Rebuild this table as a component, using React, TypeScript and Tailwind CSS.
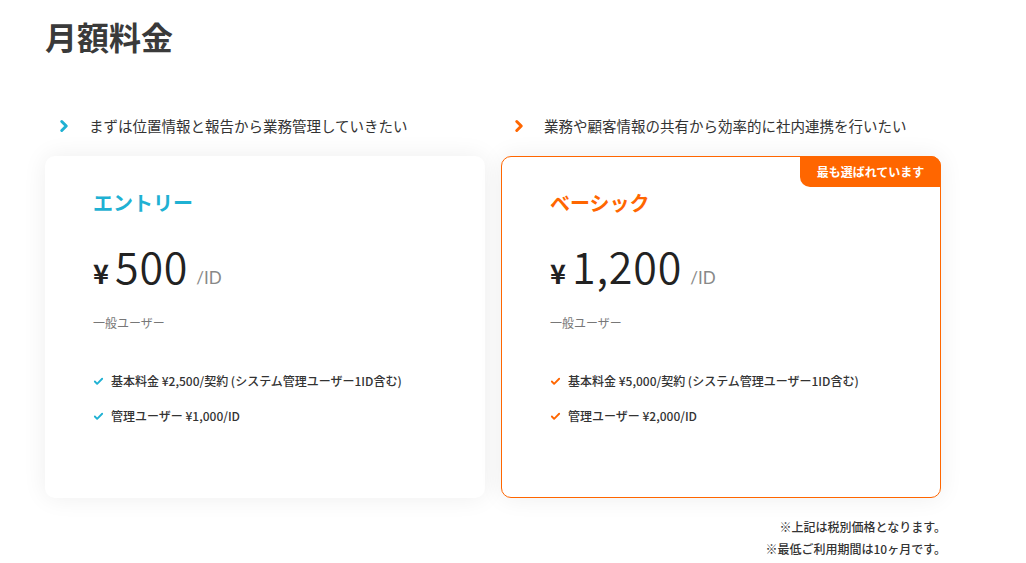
import { Check, ChevronRight } from "lucide-react";

const jp = "font-['Noto_Sans_CJK_JP','Noto_Sans',sans-serif]";

type Plan = {
  lead: string;
  name: string;
  price: string;
  features: string[];
  accent: "cyan" | "orange";
  badge?: string;
};

const plans: Plan[] = [
  {
    lead: "まずは位置情報と報告から業務管理していきたい",
    name: "エントリー",
    price: "500",
    features: ["基本料金 ¥2,500/契約 (システム管理ユーザー1ID含む)", "管理ユーザー ¥1,000/ID"],
    accent: "cyan",
  },
  {
    lead: "業務や顧客情報の共有から効率的に社内連携を行いたい",
    name: "ベーシック",
    price: "1,200",
    features: ["基本料金 ¥5,000/契約 (システム管理ユーザー1ID含む)", "管理ユーザー ¥2,000/ID"],
    accent: "orange",
    badge: "最も選ばれています",
  },
];

function PlanColumn({ plan }: { plan: Plan }) {
  const cyan = plan.accent === "cyan";
  const color = cyan ? "text-[#1fb1d3]" : "text-[#ff6600]";
  return (
    <div className="flex flex-col">
      <div className={`flex items-center h-[40px] ${cyan ? "pl-[10px]" : "pl-[9px]"}`}>
        <ChevronRight className={`size-[18px] ${color}`} strokeWidth={4} />
        <span className={`ml-[16px] text-[14.5px] text-[#333] ${jp}`}>{plan.lead}</span>
      </div>
      <div
        className={`relative mt-[10px] h-[342px] rounded-[10px] bg-white pl-[48px] pt-[34px] shadow-[0_0_24px_rgba(0,0,0,0.07)] ${
          cyan ? "" : "border border-[#ff6600]"
        }`}
      >
        {plan.badge && (
          <div
            className={`absolute -right-px -top-px flex h-[31px] w-[141px] items-center justify-center rounded-bl-[10px] rounded-tr-[10px] bg-[#ff6600] text-[12px] font-bold text-white ${jp}`}
          >
            {plan.badge}
          </div>
        )}
        <div className={`text-[20px] font-bold leading-[26px] ${color} ${jp} ${cyan ? "" : "-mt-px"}`}>{plan.name}</div>
        <div className="mt-[21px] flex h-[56px] items-baseline text-[#222]">
          <span className={`text-[27px] font-bold ${jp}`}>¥</span>
          <span className={`ml-[6px] text-[43px] font-[350] leading-[56px] tracking-[0.02em] ${jp}`}>{plan.price}</span>
          <span className="ml-[8px] font-['Lato',sans-serif] text-[17px] text-[#888]">/ID</span>
        </div>
        <div className={`mt-[21px] text-[12px] leading-[18px] text-[#777] ${jp}`}>一般ユーザー</div>
        <ul className="mt-[40px] flex flex-col gap-[17px]">
          {plan.features.map((f) => (
            <li key={f} className={`flex h-[18px] items-center text-[12px] font-medium text-[#333] ${jp}`}>
              <Check className={`size-[11px] ${color}`} strokeWidth={4} />
              <span className="ml-[7px]">{f}</span>
            </li>
          ))}
        </ul>
      </div>
    </div>
  );
}

export default function App() {
  return (
    <div className="min-h-[563px] w-[1026px] bg-white">
      <div className="ml-[45px] w-[896px] pt-[16px]">
        <h1 className={`text-[32px] font-bold leading-[40px] text-[#3a3a3a] ${jp}`}>月額料金</h1>
        <div className="mt-[50px] grid grid-cols-2 gap-[16px]">
          {plans.map((p) => (
            <PlanColumn key={p.name} plan={p} />
          ))}
        </div>
        <div className={`-mr-[5px] mt-[20px] flex flex-col items-end gap-[4px] text-[12px] font-medium leading-[18px] text-[#333] ${jp}`}>
          <p>※上記は税別価格となります。</p>
          <p>※最低ご利用期間は10ヶ月です。</p>
        </div>
      </div>
    </div>
  );
}
